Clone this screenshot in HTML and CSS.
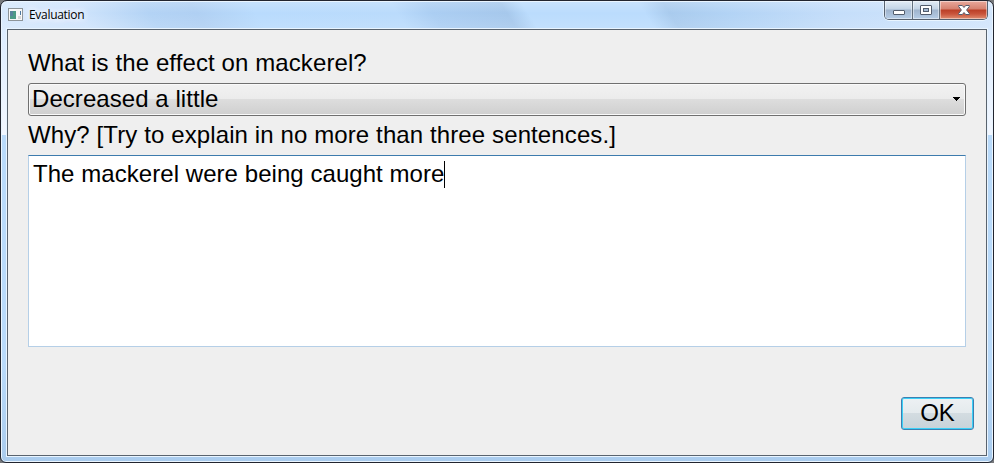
FILE: index.html
```html
<!DOCTYPE html>
<html lang="en">
<head>
<meta charset="utf-8">
<title>Evaluation</title>
<link rel="stylesheet" href="styles.css">
</head>
<body>
<div class="window">
  <header class="titlebar">
    <svg class="app-icon" width="15" height="13" viewBox="0 0 15 13">
      <rect x=".5" y=".5" width="14" height="12" fill="#f8f8f8" stroke="#8d9499"/>
      <rect x="2" y="3" width="6" height="8" fill="#4d9a86"/>
      <path d="M2 3h3v5H2z" fill="#58849c"/>
      <path d="M12 3h1v4h-1z" fill="#4c77a0"/>
      <path d="M10 8h3v3h-3z" fill="#d8d8d8"/>
    </svg>
    <span class="title">Evaluation</span>
    <div class="controls">
      <span class="control minimize"><svg width="12" height="6" viewBox="0 0 12 6"><rect x=".5" y=".5" width="11" height="4" rx=".5" fill="#fff" stroke="#535d6d"/></svg></span>
      <span class="control maximize"><svg width="12" height="10" viewBox="0 0 12 10"><rect x=".5" y=".5" width="11" height="9" rx=".5" fill="#fff" stroke="#535d6d"/><rect x="3.5" y="3.5" width="5" height="3" fill="#a4bad3" stroke="#535d6d"/></svg></span>
      <span class="control close"><svg width="12" height="10" viewBox="0 0 12 10"><path d="M.7.5h3.600L6 2.500 7.700.5h3.600v1L8.600 5l2.700 3.500v1H7.700L6 7.500 4.300 9.500H.7v-1L3.400 5 .7 1.500z" fill="#fff" stroke="#565b6c"/></svg></span>
    </div>
  </header>
  <main class="client">
    <label class="question">What is the effect on mackerel?</label>
    <div class="combo"><span class="value">Decreased a little</span>
      <svg width="8" height="4" viewBox="0 0 8 4" shape-rendering="crispEdges"><path d="M0 0h7v1H0zM1 1h5v1H1zM2 2h3v1H2zM3 3h1v1H3z"/></svg>
    </div>
    <label class="prompt">Why? [Try to explain in no more than three sentences.]</label>
    <div class="answer"><span class="typed">The mackerel were being caught more</span><span class="caret"></span></div>
    <div class="ok">OK</div>
  </main>
</div>
</body>
</html>
```
FILE: styles.css
```css
* { box-sizing: border-box; }
body { margin: 0; background: #77797c; font-family: "Liberation Sans", Arial, sans-serif; color: #000; overflow: hidden; }
.window {
  width: 994px; height: 463px; padding: 0 6px 6px 5px;
  display: flex; flex-direction: column;
  border: 1px solid #22252f; border-radius: 7px 7px 6px 6px;
  box-shadow: inset 0 0 0 1px #eaf5ff;
  background:
    linear-gradient(#dcecff, #f2f7ff 100%) 0 29px / 7px 105px no-repeat,
    linear-gradient(#dcecff, #f2f7ff 100%) 100% 29px / 7px 105px no-repeat,
    linear-gradient(#b9dafa, #b9dafa 70%, #a9cbed) 0 134px / 100% 330px no-repeat,
    linear-gradient(rgba(255,255,255,.2), transparent 12px, rgba(255,255,255,.12)) 0 0 / 100% 29px no-repeat,
    linear-gradient(58deg, #d7e8fc 0, #cfe4fc 75px, #b3d3f5 135px, #b0d0f3 175px, #b9dbfd 225px, #badbfc 345px, #abcef3 375px, #a6c8ec 438px, #bbdcfd 456px, #bbdcfd 555px, #a9cbee 576px, #b2d3f5 625px, #c5defa 720px, #d3e6fc 100%) 0 0 / 100% 29px no-repeat;
}
.titlebar { height: 28px; flex: none; display: flex; align-items: flex-start; }
.app-icon { margin: 7px 0 0 2px; flex: none; }
.title { margin: 6px 0 0 6px; font: 12px/15px "Open Sans", "Noto Sans", sans-serif; letter-spacing: -.3px; text-shadow: 0 0 7px #fff, 0 0 8px #fff, 0 0 10px #fff; }
.controls { display: flex; width: 104px; height: 19px; margin: 0 -1px 0 auto; border: 1px solid #56616f; border-top: 0; border-radius: 0 0 5px 5px; overflow: hidden; box-shadow: 0 1px #e9f5ff, -1px 0 #e3f1ff; }
.control { display: flex; justify-content: center; height: 18px; background: linear-gradient(#e2ecf6, #c3d4e6 8px, #9fb4cd 9px, #b6cde7); box-shadow: inset 0 0 0 1px rgba(255,255,255,.45); }
.control svg { display: block; }
.minimize { width: 28px; padding-top: 9px; border-right: 1px solid #63717f; }
.maximize { width: 27px; padding-top: 4px; border-right: 1px solid #63717f; }
.close { flex: 1; padding-top: 4px; background: linear-gradient(#e9a99c, #d5816f 8px, #bb3f27 9px, #c9553c 13px, #e08e72); }
.client { flex: 1; width: 980px; margin-left: 1px; display: flex; flex-direction: column; padding: 19px 20px 0; background: #efefef; border: 1px solid #59636e; box-shadow: 0 0 0 1px #e8f4ff; font-size: 24px; line-height: 28px; white-space: nowrap; }
.question { height: 34px; letter-spacing: .1px; }
.combo { height: 33px; display: flex; align-items: center; justify-content: space-between; padding: 0 4px 1px 3px; border: 1px solid #707070; border-radius: 3px; background: linear-gradient(#f2f2f2, #ebebeb 50%, #dddddd 50%, #cfcfcf); box-shadow: inset 0 0 0 1px #fafafa; }
.value { letter-spacing: .06px; }
.prompt { height: 39px; padding-top: 5px; letter-spacing: .11px; }
.answer { height: 192px; display: flex; padding: 4px; background: #fff; border: 1px solid #b5cfe7; border-top-color: #3d7bad; }
.typed { letter-spacing: .055px; }
.caret { width: 1px; height: 27px; margin-top: 1px; background: #000; }
.ok { width: 73px; height: 33px; margin: 50px -8px 0 auto; text-align: center; line-height: 30px; border: 1px solid #3c7fb1; border-radius: 3px; background: linear-gradient(#edf1f3, #e4eaed 50%, #d3dce1 50%, #c8d3d9); box-shadow: inset 0 0 0 1px #3bd0f7; }
```
